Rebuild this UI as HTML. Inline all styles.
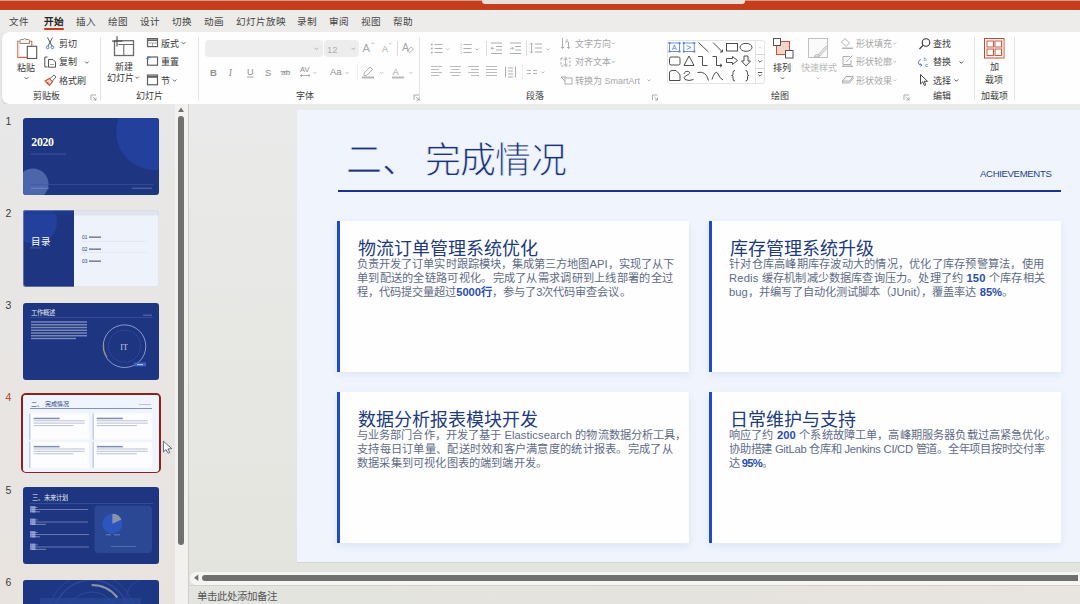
<!DOCTYPE html>
<html lang="zh-CN"><head><meta charset="utf-8"><style>
*{margin:0;padding:0;box-sizing:border-box}
html,body{width:1080px;height:604px;overflow:hidden}
body{position:relative;background:#EAE8E5;font-family:"Liberation Sans",sans-serif;color:#333}
.t{position:absolute;white-space:nowrap}
.r{position:absolute}
svg{position:absolute;overflow:visible}
</style></head><body>
<div class="r" style="left:0px;top:0px;width:1080px;height:9.7px;background:#C43E1C;"></div>
<div class="r" style="left:0px;top:0px;width:1080px;height:1px;background:#D59C8A;"></div>
<div class="r" style="left:482px;top:0px;width:263px;height:3.8px;background:#E9E0DC;border-radius:0 0 3px 3px"></div>
<div class="r" style="left:0px;top:10px;width:1080px;height:22px;background:#EDECEA;"></div>
<div class="r" style="left:0px;top:10px;width:1080px;height:1px;background:#F3EFEE;"></div>
<div class="t" style="left:9px;top:17px;font-size:9.6px;line-height:9.6px;color:#454545;font-weight:normal;">文件</div>
<div class="t" style="left:44px;top:17px;font-size:9.6px;line-height:9.6px;color:#262626;font-weight:bold;">开始</div>
<div class="t" style="left:76px;top:17px;font-size:9.6px;line-height:9.6px;color:#454545;font-weight:normal;">插入</div>
<div class="t" style="left:108px;top:17px;font-size:9.6px;line-height:9.6px;color:#454545;font-weight:normal;">绘图</div>
<div class="t" style="left:140px;top:17px;font-size:9.6px;line-height:9.6px;color:#454545;font-weight:normal;">设计</div>
<div class="t" style="left:172px;top:17px;font-size:9.6px;line-height:9.6px;color:#454545;font-weight:normal;">切换</div>
<div class="t" style="left:204px;top:17px;font-size:9.6px;line-height:9.6px;color:#454545;font-weight:normal;">动画</div>
<div class="t" style="left:236px;top:17px;font-size:9.6px;line-height:9.6px;color:#454545;font-weight:normal;">幻灯片放映</div>
<div class="t" style="left:297px;top:17px;font-size:9.6px;line-height:9.6px;color:#454545;font-weight:normal;">录制</div>
<div class="t" style="left:329px;top:17px;font-size:9.6px;line-height:9.6px;color:#454545;font-weight:normal;">审阅</div>
<div class="t" style="left:361px;top:17px;font-size:9.6px;line-height:9.6px;color:#454545;font-weight:normal;">视图</div>
<div class="t" style="left:393px;top:17px;font-size:9.6px;line-height:9.6px;color:#454545;font-weight:normal;">帮助</div>
<div class="r" style="left:44px;top:28px;width:20px;height:2px;background:#C43E1C;border-radius:1px"></div>
<div class="r" style="left:2px;top:32px;width:1100px;height:72px;background:#FEFEFE;border-radius:7px;box-shadow:0 1px 1.5px rgba(0,0,0,.16)"></div>
<div class="t" style="left:33px;top:92.3px;font-size:9px;line-height:9px;color:#3A3A3A;font-weight:normal;">剪贴板</div>
<div class="t" style="left:136px;top:92.3px;font-size:9px;line-height:9px;color:#3A3A3A;font-weight:normal;">幻灯片</div>
<div class="t" style="left:296px;top:92.3px;font-size:9px;line-height:9px;color:#3A3A3A;font-weight:normal;">字体</div>
<div class="t" style="left:526px;top:92.3px;font-size:9px;line-height:9px;color:#3A3A3A;font-weight:normal;">段落</div>
<div class="t" style="left:771px;top:92.3px;font-size:9px;line-height:9px;color:#3A3A3A;font-weight:normal;">绘图</div>
<div class="t" style="left:933px;top:92.3px;font-size:9px;line-height:9px;color:#3A3A3A;font-weight:normal;">编辑</div>
<div class="t" style="left:981px;top:92.3px;font-size:9px;line-height:9px;color:#3A3A3A;font-weight:normal;">加载项</div>
<div class="r" style="left:100px;top:37px;width:1px;height:64px;background:#E6E4E2;"></div>
<div class="r" style="left:198px;top:37px;width:1px;height:64px;background:#E6E4E2;"></div>
<div class="r" style="left:419px;top:37px;width:1px;height:64px;background:#E6E4E2;"></div>
<div class="r" style="left:974px;top:37px;width:1px;height:64px;background:#E6E4E2;"></div>
<div class="r" style="left:1014px;top:37px;width:1px;height:64px;background:#E6E4E2;"></div>
<div class="t" style="left:17px;top:63.5px;font-size:9px;line-height:9px;color:#3A3A3A;font-weight:normal;">粘贴</div>
<div class="t" style="left:59px;top:40px;font-size:9px;line-height:9px;color:#3A3A3A;font-weight:normal;">剪切</div>
<div class="t" style="left:59px;top:58px;font-size:9px;line-height:9px;color:#3A3A3A;font-weight:normal;">复制</div>
<div class="t" style="left:59px;top:76.5px;font-size:9px;line-height:9px;color:#3A3A3A;font-weight:normal;">格式刷</div>
<div class="t" style="left:115px;top:63px;font-size:9px;line-height:9px;color:#3A3A3A;font-weight:normal;">新建</div>
<div class="t" style="left:107px;top:73.5px;font-size:9px;line-height:9px;color:#3A3A3A;font-weight:normal;">幻灯片</div>
<div class="t" style="left:161px;top:39.5px;font-size:9px;line-height:9px;color:#3A3A3A;font-weight:normal;">版式</div>
<div class="t" style="left:161px;top:58px;font-size:9px;line-height:9px;color:#3A3A3A;font-weight:normal;">重置</div>
<div class="t" style="left:161px;top:76.5px;font-size:9px;line-height:9px;color:#3A3A3A;font-weight:normal;">节</div>
<div class="r" style="left:204.5px;top:40.2px;width:118px;height:16.8px;background:#EDEDED;border-radius:4px"></div>
<div class="r" style="left:324px;top:40.2px;width:34.5px;height:16.8px;background:#EDEDED;border-radius:4px"></div>
<div class="t" style="left:327px;top:44.5px;font-size:9.5px;line-height:9.5px;color:#B0B0B0;font-weight:normal;">12</div>
<div class="r" style="left:397px;top:41px;width:1px;height:15px;background:#E3D9D4;"></div>
<div class="r" style="left:357px;top:65px;width:1px;height:14px;background:#ECECEC;"></div>
<div class="r" style="left:486px;top:41px;width:1px;height:15px;background:#E3D9D4;"></div>
<div class="r" style="left:526px;top:41px;width:1px;height:15px;background:#E3D9D4;"></div>
<div class="r" style="left:522px;top:65px;width:1px;height:14px;background:#ECECEC;"></div>
<div class="t" style="left:575px;top:39.5px;font-size:9px;line-height:9px;color:#A6A6A6;font-weight:normal;">文字方向</div>
<div class="t" style="left:575px;top:58px;font-size:9px;line-height:9px;color:#A6A6A6;font-weight:normal;">对齐文本</div>
<div class="t" style="left:575px;top:76.5px;font-size:9px;line-height:9px;color:#A6A6A6;font-weight:normal;">转换为 SmartArt</div>
<div class="r" style="left:667px;top:40px;width:98px;height:44px;background:#FFFFFF;border:1px solid #E4E4E4;border-radius:3px"></div>
<div class="r" style="left:755px;top:40px;width:10px;height:44px;background:transparent;border-left:1px solid #E4E4E4"></div>
<div class="r" style="left:755px;top:54px;width:10px;height:1px;background:#D0D8E8;"></div>
<div class="r" style="left:755px;top:68px;width:10px;height:1px;background:#D0D8E8;"></div>
<div class="t" style="left:773px;top:63.5px;font-size:9px;line-height:9px;color:#3A3A3A;font-weight:normal;">排列</div>
<div class="t" style="left:801px;top:63.5px;font-size:9px;line-height:9px;color:#B8B8B8;font-weight:normal;">快速样式</div>
<div class="t" style="left:856px;top:39.5px;font-size:9px;line-height:9px;color:#A6A6A6;font-weight:normal;">形状填充</div>
<div class="t" style="left:856px;top:58px;font-size:9px;line-height:9px;color:#A6A6A6;font-weight:normal;">形状轮廓</div>
<div class="t" style="left:856px;top:76.5px;font-size:9px;line-height:9px;color:#A6A6A6;font-weight:normal;">形状效果</div>
<div class="t" style="left:933px;top:40px;font-size:9px;line-height:9px;color:#3A3A3A;font-weight:normal;">查找</div>
<div class="t" style="left:933px;top:58px;font-size:9px;line-height:9px;color:#3A3A3A;font-weight:normal;">替换</div>
<div class="t" style="left:933px;top:76.5px;font-size:9px;line-height:9px;color:#3A3A3A;font-weight:normal;">选择</div>
<div class="t" style="left:990px;top:63px;font-size:9px;line-height:9px;color:#3A3A3A;font-weight:normal;">加</div>
<div class="t" style="left:985px;top:75.5px;font-size:9px;line-height:9px;color:#3A3A3A;font-weight:normal;">载项</div>
<svg style="left:0;top:0" width="1080" height="604"><rect x="17.8" y="41.2" width="14" height="16.2" fill="#FFFFFF"/><path d="M19.5 41.2 H17.8 V57.4 H27.5 M30 41.2 H31.8 V46" fill="none" stroke="#D8694A" stroke-width="1.1"/><rect x="18.4" y="41.8" width="1" height="15" fill="#F8D9CF"/><path d="M20 43.5 V40.5 Q20 39.5 21 39.5 H23 Q24.5 37.5 26 39.5 H28.5 Q29.5 39.5 29.5 40.5 V43.5 Z" fill="#F2F2F2" stroke="#8A8A8A" stroke-width="1"/><rect x="27.3" y="46.3" width="9.4" height="12.2" fill="#fff" stroke="#555" stroke-width="1.1"/><path d="M24.7 77.2 L26.5 79.0 L28.3 77.2" fill="none" stroke="#555" stroke-width="0.9"/><path d="M47.5 37.5 L52 46 M52.5 37.5 L48 46" stroke="#444" stroke-width="0.9" fill="none"/><circle cx="47.6" cy="47.4" r="1.3" fill="none" stroke="#3F6FD0" stroke-width="0.9"/><circle cx="52.4" cy="47.4" r="1.3" fill="none" stroke="#3F6FD0" stroke-width="0.9"/><path d="M47.5 57 H44.8 V67 H47.5" fill="none" stroke="#555" stroke-width="1"/><path d="M48.5 59.5 H53 L55.5 62 V67.2 H48.5 Z" fill="#fff" stroke="#555" stroke-width="1"/><path d="M50 64.5 H54" stroke="#888" stroke-width="0.8"/><path d="M85 61.5 L86.8 63.3 L88.6 61.5" fill="none" stroke="#555" stroke-width="0.9"/><path d="M45 81 L49.5 78.5 L52.5 81.5 L49.5 85.5 Z" fill="#FBE3DA" stroke="#D04A28" stroke-width="1.1"/><path d="M46.5 83 L48.5 82 M47.5 84.3 L49.5 83" stroke="#D04A28" stroke-width="0.7"/><path d="M50 78.5 L54 75 L56 77 L52.5 81" fill="#fff" stroke="#555" stroke-width="0.9"/><path d="M91 100 V95 H96" fill="none" stroke="#9A9A9A" stroke-width="0.8"/><path d="M92.8 96.8 L96 100 M96 97.5 V100 H93.5" fill="none" stroke="#9A9A9A" stroke-width="0.8"/><rect x="114.5" y="40.7" width="19" height="14.8" fill="#fff" stroke="#6A6A6A" stroke-width="1.3"/><path d="M118.5 44.5 H133 M123.8 44.5 V55" stroke="#6A6A6A" stroke-width="1.1"/><path d="M117 36.3 V46.5 M112 41.2 H122.5" stroke="#555" stroke-width="1.2"/><path d="M135.3 76.6 L137.10000000000002 78.39999999999999 L138.9 76.6" fill="none" stroke="#555" stroke-width="0.9"/><rect x="147.5" y="38.6" width="10" height="8" fill="#fff" stroke="#606060" stroke-width="1.2"/><path d="M147.5 40.2 H157.5" stroke="#606060" stroke-width="1.6"/><path d="M148 43 H157 M152.5 43 V46" stroke="#909090" stroke-width="0.8"/><path d="M181.7 42.2 L183.5 44.0 L185.29999999999998 42.2" fill="none" stroke="#555" stroke-width="0.9"/><rect x="147.5" y="57" width="10" height="8.2" fill="#fff" stroke="#606060" stroke-width="1.2"/><path d="M146.5 58.5 Q148 56 151 57.5 M146.5 58.5 L149 59" fill="none" stroke="#4A7AD8" stroke-width="1"/><rect x="147.5" y="75" width="10" height="9.8" fill="#fff" stroke="#606060" stroke-width="1.2"/><path d="M147.5 76.8 H157.5" stroke="#606060" stroke-width="2"/><path d="M172.8 79.5 L174.60000000000002 81.3 L176.4 79.5" fill="none" stroke="#555" stroke-width="0.9"/><path d="M314.5 47.8 L316.3 49.599999999999994 L318.1 47.8" fill="none" stroke="#A8A8A8" stroke-width="0.9"/><path d="M351.5 47.8 L353.3 49.599999999999994 L355.1 47.8" fill="none" stroke="#A8A8A8" stroke-width="0.9"/><text x="362.5" y="51.5" font-family="Liberation Sans" font-size="11" fill="#A6A6A6">A</text><path d="M371.5 44 L372.8 42.6 L374.1 44" fill="none" stroke="#A6A6A6" stroke-width="0.7"/><text x="382" y="51.5" font-family="Liberation Sans" font-size="9" fill="#A6A6A6">A</text><path d="M389 43 L390.2 44.2 L391.4 43" fill="none" stroke="#A6A6A6" stroke-width="0.7"/><text x="402" y="51" font-family="Liberation Sans" font-size="10.5" fill="#A6A6A6">A</text><path d="M407 51 L411 47 L413.5 49 L410 52.5 Z" fill="none" stroke="#A6A6A6" stroke-width="0.8"/><text x="210" y="75.5" font-family="Liberation Sans" font-weight="bold" font-size="9.5" fill="#8E8E8E">B</text><text x="228.8" y="75.5" font-family="Liberation Serif" font-style="italic" font-size="9.5" fill="#8E8E8E">I</text><text x="247" y="74.5" font-family="Liberation Sans" font-size="9" fill="#8E8E8E">U</text><path d="M247 77 H253.5" stroke="#8E8E8E" stroke-width="0.8"/><text x="265" y="75.5" font-family="Liberation Sans" font-size="9.5" fill="#8E8E8E">S</text><text x="281.2" y="75" font-family="Liberation Sans" font-size="8" fill="#8E8E8E">ab</text><path d="M280.5 71.7 H289.5" stroke="#8E8E8E" stroke-width="0.8"/><text x="300" y="71.5" font-family="Liberation Sans" font-size="7.5" fill="#8E8E8E">AV</text><path d="M300.5 75.5 H310 M302 74.3 L300.5 75.5 L302 76.7 M308.5 74.3 L310 75.5 L308.5 76.7" fill="none" stroke="#8E8E8E" stroke-width="0.7"/><path d="M313.3 72.2 L314.8 73.7 L316.3 72.2" fill="none" stroke="#B0B0B0" stroke-width="0.9"/><text x="330" y="75" font-family="Liberation Sans" font-size="9.5" fill="#8E8E8E">Aa</text><path d="M345.5 72.2 L347.0 73.7 L348.5 72.2" fill="none" stroke="#B0B0B0" stroke-width="0.9"/><path d="M364 73 L370 67 L372.5 69.5 L366.5 75.5 H364 Z" fill="none" stroke="#A6A6A6" stroke-width="0.9"/><rect x="362" y="76.5" width="12" height="2" fill="#B8B8B8"/><path d="M380.2 72.2 L381.7 73.7 L383.2 72.2" fill="none" stroke="#B0B0B0" stroke-width="0.9"/><text x="392.5" y="74.5" font-family="Liberation Sans" font-size="9.5" fill="#A6A6A6">A</text><rect x="392" y="76.5" width="12" height="2" fill="#B8B8B8"/><path d="M409.3 72.2 L410.8 73.7 L412.3 72.2" fill="none" stroke="#B0B0B0" stroke-width="0.9"/><path d="M414 100 V95 H419" fill="none" stroke="#9A9A9A" stroke-width="0.8"/><path d="M415.8 96.8 L419 100 M419 97.5 V100 H416.5" fill="none" stroke="#9A9A9A" stroke-width="0.8"/><rect x="431" y="43.7" width="1.6" height="1.6" fill="#A6A6A6"/><path d="M434.5 44.5 H442.5" stroke="#A6A6A6" stroke-width="0.9"/><rect x="431" y="47.7" width="1.6" height="1.6" fill="#A6A6A6"/><path d="M434.5 48.5 H442.5" stroke="#A6A6A6" stroke-width="0.9"/><rect x="431" y="51.7" width="1.6" height="1.6" fill="#A6A6A6"/><path d="M434.5 52.5 H442.5" stroke="#A6A6A6" stroke-width="0.9"/><path d="M446.2 48.5 L447.7 50.0 L449.2 48.5" fill="none" stroke="#B0B0B0" stroke-width="0.9"/><text x="460" y="46.0" font-family="Liberation Sans" font-size="3.5" fill="#A6A6A6">1</text><path d="M463.5 44.5 H471.5" stroke="#A6A6A6" stroke-width="0.9"/><text x="460" y="50.0" font-family="Liberation Sans" font-size="3.5" fill="#A6A6A6">2</text><path d="M463.5 48.5 H471.5" stroke="#A6A6A6" stroke-width="0.9"/><text x="460" y="54.0" font-family="Liberation Sans" font-size="3.5" fill="#A6A6A6">3</text><path d="M463.5 52.5 H471.5" stroke="#A6A6A6" stroke-width="0.9"/><path d="M475.5 48.5 L477.0 50.0 L478.5 48.5" fill="none" stroke="#B0B0B0" stroke-width="0.9"/><path d="M491 43 H502 M496 46.5 H502 M496 50 H502 M491 53.5 H502" stroke="#A6A6A6" stroke-width="0.9"/><path d="M494.5 48.3 L491 48.3 M492.5 46.8 L491 48.3 L492.5 49.8" fill="none" stroke="#A6A6A6" stroke-width="0.8"/><path d="M510 43 H521 M515 46.5 H521 M515 50 H521 M510 53.5 H521" stroke="#A6A6A6" stroke-width="0.9"/><path d="M510 48.3 L513.5 48.3 M512 46.8 L513.5 48.3 L512 49.8" fill="none" stroke="#A6A6A6" stroke-width="0.8"/><path d="M535 44 H542 M535 48 H542 M535 52 H542 M531.5 43 V53 M530 44.5 L531.5 43 L533 44.5 M530 51.5 L531.5 53 L533 51.5" fill="none" stroke="#A6A6A6" stroke-width="0.9"/><path d="M546.3 48.5 L547.8 50.0 L549.3 48.5" fill="none" stroke="#B0B0B0" stroke-width="0.9"/><path d="M431 66.5 H442" stroke="#ABABAB" stroke-width="0.8"/><path d="M431 69.5 H439" stroke="#ABABAB" stroke-width="0.8"/><path d="M431 72.5 H442" stroke="#ABABAB" stroke-width="0.8"/><path d="M431 75.5 H439" stroke="#ABABAB" stroke-width="0.8"/><path d="M450 66.5 H461" stroke="#ABABAB" stroke-width="0.8"/><path d="M451.5 69.5 H459.5" stroke="#ABABAB" stroke-width="0.8"/><path d="M450 72.5 H461" stroke="#ABABAB" stroke-width="0.8"/><path d="M451.5 75.5 H459.5" stroke="#ABABAB" stroke-width="0.8"/><path d="M468 66.5 H479" stroke="#ABABAB" stroke-width="0.8"/><path d="M471 69.5 H479" stroke="#ABABAB" stroke-width="0.8"/><path d="M468 72.5 H479" stroke="#ABABAB" stroke-width="0.8"/><path d="M471 75.5 H479" stroke="#ABABAB" stroke-width="0.8"/><path d="M486 66.5 H497" stroke="#ABABAB" stroke-width="0.8"/><path d="M486 69.5 H497" stroke="#ABABAB" stroke-width="0.8"/><path d="M486 72.5 H497" stroke="#ABABAB" stroke-width="0.8"/><path d="M486 75.5 H497" stroke="#ABABAB" stroke-width="0.8"/><path d="M505.5 66.5 V77.5 M515.5 66.5 V77.5 M508 68 H513 M508 71 H513 M508 74 H513 M508 77 H513" fill="none" stroke="#A6A6A6" stroke-width="0.9"/><path d="M527 70.5 H531 M533 70.5 H537 M527 73.5 H531 M533 73.5 H537" stroke="#A6A6A6" stroke-width="0.9"/><path d="M541.3 71.5 L542.8 73.0 L544.3 71.5" fill="none" stroke="#B0B0B0" stroke-width="0.9"/><path d="M562.5 38 V48.5 M561 47 L562.5 48.5 L564 47 M568.5 42 V48.5 M567 47 L568.5 48.5 L570 47" fill="none" stroke="#A6A6A6" stroke-width="0.9"/><text x="565" y="43" font-family="Liberation Sans" font-size="5.5" fill="#A6A6A6">A</text><path d="M611.7 42.5 L613.2 44.0 L614.7 42.5" fill="none" stroke="#B0B0B0" stroke-width="0.9"/><path d="M561 58 V66 H570 V58 Z" fill="none" stroke="#A6A6A6" stroke-width="0.9" stroke-dasharray="2.5 1.5"/><path d="M565.5 58.5 V65.5 M563.5 60 L565.5 58.5 L567.5 60 M563.5 64 L565.5 65.5 L567.5 64" fill="none" stroke="#A6A6A6" stroke-width="0.8"/><path d="M611.7 61 L613.2 62.5 L614.7 61" fill="none" stroke="#B0B0B0" stroke-width="0.9"/><path d="M561 77 H566 M561 77 L565 81 H567" fill="none" stroke="#A6A6A6" stroke-width="1"/><rect x="565" y="78" width="7" height="6" fill="#fff" stroke="#A6A6A6" stroke-width="0.9"/><path d="M647.5 79.5 L649.0 81.0 L650.5 79.5" fill="none" stroke="#B0B0B0" stroke-width="0.9"/><path d="M652.5 100 V95 H657.5" fill="none" stroke="#9A9A9A" stroke-width="0.8"/><path d="M654.3 96.8 L657.5 100 M657.5 97.5 V100 H655.0" fill="none" stroke="#9A9A9A" stroke-width="0.8"/><rect x="669.5" y="43" width="10" height="8.5" fill="none" stroke="#5B86D8" stroke-width="0.9"/><text x="671.8" y="50.3" font-family="Liberation Sans" font-size="7.5" fill="#5B86D8">A</text>
<rect x="683.8" y="43" width="10.5" height="8.5" fill="none" stroke="#5B86D8" stroke-width="0.9"/><path d="M686.5 45.5 L691 47.5 L686.5 49.5" fill="none" stroke="#5B86D8" stroke-width="0.8"/>
<path d="M698.5 42.5 L708.5 52 M713 42.5 L722.5 52 M720 52 H722.5 V49.5" fill="none" stroke="#3A3A3A" stroke-width="0.9"/>
<rect x="726.5" y="43.5" width="11" height="7.5" fill="none" stroke="#3A3A3A" stroke-width="0.9"/><ellipse cx="746" cy="47.3" rx="6" ry="4" fill="none" stroke="#3A3A3A" stroke-width="0.9"/>
<rect x="669.5" y="57" width="10.5" height="8" rx="1.5" fill="none" stroke="#3A3A3A" stroke-width="0.9"/><path d="M684 65.5 L689 56 L694 65.5 Z" fill="none" stroke="#3A3A3A" stroke-width="0.9"/>
<path d="M698 56.5 H702.5 V65.5 H707.5 M712.5 56.5 H716.5 V65.5 H722 M720 63.8 L722 65.5 L720 67.2" fill="none" stroke="#3A3A3A" stroke-width="0.9"/>
<path d="M726.5 58.5 H732.5 V56.5 L737.5 60.5 L732.5 64.5 V62.5 H726.5 Z" fill="none" stroke="#3A3A3A" stroke-width="0.9"/><path d="M744 56 H748 V61 H750.5 L746 66 L741.5 61 H744 Z" fill="none" stroke="#3A3A3A" stroke-width="0.9"/>
<path d="M669.5 80.5 V73 Q669.5 70.5 672 70.5 H676 Q678 73 680 74.5 V80.5 Z" fill="none" stroke="#3A3A3A" stroke-width="0.9"/>
<path d="M684 74 Q685 70.5 688.5 71.5 Q692 73 685.5 76 Q683 77 685 79.5 Q689 81.5 693.5 79.5" fill="none" stroke="#3A3A3A" stroke-width="0.9"/>
<path d="M697.5 72.5 Q706 70.5 708.5 80.5 M712 79.5 Q715 70 717.5 73 Q720 79 723 80" fill="none" stroke="#3A3A3A" stroke-width="0.9"/>
<path d="M735 70.5 Q733 70.5 733 72.5 V74.5 Q733 75.5 731.5 75.5 Q733 75.5 733 76.5 V79 Q733 81 735 81 M745.5 70.5 Q747.5 70.5 747.5 72.5 V74.5 Q747.5 75.5 749 75.5 Q747.5 75.5 747.5 76.5 V79 Q747.5 81 745.5 81" fill="none" stroke="#3A3A3A" stroke-width="0.9"/><path d="M758.3 48.5 L760 46.8 L761.7 48.5" fill="none" stroke="#C8C8C8" stroke-width="0.8"/><path d="M758.3 60.5 L760 62.2 L761.7 60.5" fill="none" stroke="#444" stroke-width="0.9"/><path d="M757.8 72.5 H762.2 M758.3 74.5 L760 76.2 L761.7 74.5" fill="none" stroke="#444" stroke-width="0.9"/><rect x="668.5" y="42" width="2" height="2" fill="#5B86D8"/><rect x="678.5" y="42" width="2" height="2" fill="#5B86D8"/><rect x="668.5" y="50.5" width="2" height="2" fill="#5B86D8"/><rect x="678.5" y="50.5" width="2" height="2" fill="#5B86D8"/><rect x="682.8" y="42" width="2" height="2" fill="#5B86D8"/><rect x="693.3" y="42" width="2" height="2" fill="#5B86D8"/><rect x="682.8" y="50.5" width="2" height="2" fill="#5B86D8"/><rect x="693.3" y="50.5" width="2" height="2" fill="#5B86D8"/><rect x="776.5" y="41.5" width="13" height="13" fill="#F4D5CC" stroke="#D0502F" stroke-width="1"/><rect x="773.5" y="38.5" width="7" height="7" fill="#fff" stroke="#555" stroke-width="1"/><rect x="785.5" y="50.5" width="7.5" height="7.5" fill="#fff" stroke="#555" stroke-width="1"/><path d="M781 77.5 L782.5 79.0 L784 77.5" fill="none" stroke="#444" stroke-width="0.9"/><rect x="808.5" y="38.5" width="19" height="19" fill="#FAFAFA" stroke="#C0C0C0" stroke-width="1"/><path d="M818 55 L826 46 L827.5 47.5 L820 56 Z M814 57 Q815 53.5 818 54.5 L819.5 56.5 Z" fill="#E4E4E4" stroke="#B8B8B8" stroke-width="0.8"/><path d="M816.5 77.5 L818.0 79.0 L819.5 77.5" fill="none" stroke="#C0C0C0" stroke-width="0.9"/><path d="M845 38.5 L849.5 43 L846 46.5 L841.5 42 Z" fill="none" stroke="#A6A6A6" stroke-width="0.9"/><rect x="842" y="47.5" width="11" height="1.5" fill="#B8B8B8"/><path d="M893.2 42.5 L894.7 44.0 L896.2 42.5" fill="none" stroke="#B8B8B8" stroke-width="0.9"/><path d="M843 56.5 H850 M843 56.5 V64.5 H851 V60 M846 62 L852.5 55.5" fill="none" stroke="#A6A6A6" stroke-width="0.9"/><rect x="842" y="65.5" width="11" height="1.5" fill="#B8B8B8"/><path d="M893.2 61 L894.7 62.5 L896.2 61" fill="none" stroke="#B8B8B8" stroke-width="0.9"/><path d="M842.5 81 L846 76.5 H853 L849.5 81 Z M842.5 81 V83 L849.5 83 L853 78.5 V76.5" fill="#F0F0F0" stroke="#A6A6A6" stroke-width="0.9"/><path d="M893.2 79.5 L894.7 81.0 L896.2 79.5" fill="none" stroke="#B8B8B8" stroke-width="0.9"/><path d="M904 100 V95 H909" fill="none" stroke="#9A9A9A" stroke-width="0.8"/><path d="M905.8 96.8 L909 100 M909 97.5 V100 H906.5" fill="none" stroke="#9A9A9A" stroke-width="0.8"/><circle cx="926" cy="42.5" r="3.8" fill="none" stroke="#333" stroke-width="1.1"/><path d="M923.3 45.2 L919.5 49" stroke="#333" stroke-width="1.2"/><text x="923.5" y="60.5" font-family="Liberation Sans" font-size="5.5" fill="#5B86D8">b</text><text x="925" y="67" font-family="Liberation Sans" font-size="6" fill="#3F6FD0">c</text><path d="M921 59.5 Q918.5 60 918.5 62.5 Q918.5 65 921 65 M920 63.8 L922 65 L920.5 66.5" fill="none" stroke="#3F6FD0" stroke-width="0.9"/><path d="M959.5 61.5 L961.3 63.3 L963.1 61.5" fill="none" stroke="#444" stroke-width="0.9"/><path d="M920.5 74.5 V84 L922.8 81.8 L924.5 85.5 L925.8 84.8 L924.2 81.3 L927.5 81.3 Z" fill="#fff" stroke="#333" stroke-width="0.9" stroke-linejoin="round"/><path d="M954.5 79.5 L956.3 81.3 L958.1 79.5" fill="none" stroke="#444" stroke-width="0.9"/><rect x="984.5" y="38.5" width="19.5" height="19.5" fill="#fff" stroke="#C8472A" stroke-width="1"/><rect x="1001.5" y="40" width="2" height="17.5" fill="#F6D8CE"/><rect x="987" y="41" width="6.5" height="6" fill="#fff" stroke="#C8472A" stroke-width="0.9"/><rect x="995" y="41" width="6.5" height="6" fill="#fff" stroke="#C8472A" stroke-width="0.9"/><rect x="987" y="49" width="6.5" height="6.5" fill="#fff" stroke="#C8472A" stroke-width="0.9"/><rect x="995" y="49" width="6.5" height="6.5" fill="#fff" stroke="#C8472A" stroke-width="0.9"/></svg>
<div class="r" style="left:0px;top:104px;width:175px;height:500px;background:linear-gradient(#E8E8E8,#E8E3DF);"></div>
<div class="r" style="left:175px;top:104px;width:13px;height:500px;background:#F2F1EF;"></div>
<div class="r" style="left:188px;top:104px;width:892px;height:481px;background:linear-gradient(#EAEAEA,#E4E4DE);"></div>
<div class="r" style="left:188px;top:104px;width:1px;height:500px;background:#CFCDCA;"></div>
<svg style="left:0;top:0" width="1080" height="604"><path d="M178 112 L181 107.5 L184 112 Z" fill="#6F6F6F"/></svg>
<div class="r" style="left:178px;top:116px;width:6px;height:429px;background:#6F706F;border-radius:3px"></div>
<div class="r" style="left:190px;top:571.5px;width:900px;height:13px;background:#F6F5F3;border-radius:6.5px 0 0 6.5px"></div>
<svg style="left:0;top:0" width="1080" height="604"><path d="M198.3 574.5 L194 577.7 L198.3 580.9 Z" fill="#6F6F6F"/></svg>
<div class="r" style="left:202px;top:575px;width:876px;height:6px;background:#6E706E;border-radius:3px 0 0 3px"></div>
<div class="r" style="left:1079px;top:110px;width:1px;height:452px;background:#F4F6FA;"></div>
<div class="r" style="left:189px;top:584.5px;width:891px;height:1px;background:#D3D1CD;"></div>
<div class="r" style="left:189px;top:585.5px;width:891px;height:19px;background:linear-gradient(90deg,#E3E4DF,#E5E3DE 50%,#E8E4DF);"></div>
<div class="t" style="left:197px;top:591px;font-size:10.5px;line-height:10.5px;color:#555555;font-weight:normal;">单击此处添加备注</div>
<div class="t" style="left:5.5px;top:115.5px;font-size:10.5px;line-height:10.5px;color:#3B3B3B;font-weight:normal;">1</div>
<div class="t" style="left:5.5px;top:207.8px;font-size:10.5px;line-height:10.5px;color:#3B3B3B;font-weight:normal;">2</div>
<div class="t" style="left:5.5px;top:300.1px;font-size:10.5px;line-height:10.5px;color:#3B3B3B;font-weight:normal;">3</div>
<div class="t" style="left:5.5px;top:392.4px;font-size:10.5px;line-height:10.5px;color:#C43E1C;font-weight:normal;">4</div>
<div class="t" style="left:5.5px;top:484.7px;font-size:10.5px;line-height:10.5px;color:#3B3B3B;font-weight:normal;">5</div>
<div class="t" style="left:5.5px;top:577.0px;font-size:10.5px;line-height:10.5px;color:#3B3B3B;font-weight:normal;">6</div>
<svg style="left:23px;top:118px" width="136" height="77" viewBox="0 0 136 77"><defs><clipPath id="c118"><rect width="136" height="77" rx="3"/></clipPath></defs><g clip-path="url(#c118)"><rect width="136" height="77" fill="#1E3581"/>
<circle cx="131" cy="14" r="38" fill="#22409C"/>
<circle cx="10" cy="66" r="15.5" fill="#4D65AA"/>
<text x="8.3" y="27.5" font-family="Liberation Serif" font-weight="bold" font-size="11.8" fill="#fff" letter-spacing="-0.3">2020</text>
<rect x="8" y="35.5" width="35" height="1.1" fill="#5C76BC" opacity="0.5"/>
<rect x="7" y="66.3" width="123" height="0.6" fill="#3D59A8"/>
<rect x="8" y="69.7" width="18" height="1" fill="#A8B4D8" opacity="0.45"/>
<rect x="109" y="69.7" width="20" height="1" fill="#A8B4D8" opacity="0.45"/></g></svg>
<svg style="left:23px;top:210px" width="136" height="77" viewBox="0 0 136 77"><defs><clipPath id="c210"><rect width="136" height="77" rx="3"/></clipPath></defs><g clip-path="url(#c210)"><rect width="136" height="77" fill="#EEF2FA"/>
<rect width="136" height="5.5" fill="#DFE4EE"/>
<rect width="51" height="77" fill="#1E3581"/>
<circle cx="12" cy="12" r="22" fill="#22409C"/>
<rect x="0" y="0" width="51" height="4.5" fill="#1E3A90" opacity="0.5"/>
<text x="7.5" y="34.5" font-size="9.5" fill="#fff" font-family="Liberation Serif">目录</text>
<rect x="7" y="37.5" width="11" height="0.8" fill="#8FA2D0" opacity="0.5"/>
<text x="59" y="29" font-size="4.8" fill="#2A3E88">01</text><rect x="66" y="26.5" width="12" height="1.3" fill="#3A4A78" opacity="0.8"/>
<text x="59" y="41" font-size="4.8" fill="#2A3E88">02</text><rect x="66" y="38.5" width="12" height="1.3" fill="#3A4A78" opacity="0.8"/>
<text x="59" y="53" font-size="4.8" fill="#2A3E88">03</text><rect x="66" y="50.5" width="12" height="1.3" fill="#3A4A78" opacity="0.8"/>
<rect x="59" y="31" width="65" height="0.4" fill="#D3DAEA"/><rect x="59" y="42.5" width="65" height="0.4" fill="#D3DAEA"/>
<rect x="0.25" y="0.25" width="135.5" height="76.5" rx="3" fill="none" stroke="#CFCFCF" stroke-width="0.5"/></g></svg>
<svg style="left:23px;top:302.6px" width="136" height="77" viewBox="0 0 136 77"><defs><clipPath id="c302"><rect width="136" height="77" rx="3"/></clipPath></defs><g clip-path="url(#c302)"><rect width="136" height="77" fill="#1E3581"/>
<text x="8" y="12" font-size="6.3" fill="#fff" opacity="0.9">工作概述</text>
<rect x="7" y="14.5" width="123" height="0.5" fill="#4863AE"/>
<rect x="120" y="11.8" width="9" height="0.6" fill="#8FA2D0"/>
<rect x="8" y="18.30" width="56" height="1.4" fill="#DDE3F6" opacity="0.5"/><rect x="8" y="21.05" width="56" height="1.4" fill="#DDE3F6" opacity="0.5"/><rect x="8" y="23.80" width="56" height="1.4" fill="#DDE3F6" opacity="0.5"/><rect x="8" y="26.55" width="56" height="1.4" fill="#DDE3F6" opacity="0.5"/><rect x="8" y="29.30" width="56" height="1.4" fill="#DDE3F6" opacity="0.5"/><rect x="8" y="32.05" width="56" height="1.4" fill="#DDE3F6" opacity="0.5"/><rect x="8" y="34.80" width="45" height="1.4" fill="#DDE3F6" opacity="0.5"/>
<circle cx="101.5" cy="43.2" r="21.3" fill="none" stroke="#B8C6EA" stroke-width="0.7"/>
<circle cx="101.5" cy="43.2" r="16" fill="none" stroke="#3E64C8" stroke-width="0.6" stroke-dasharray="1.5 1"/>
<path d="M84 54 A21.3 21.3 0 0 1 80.5 40" fill="none" stroke="#C0A060" stroke-width="0.7"/>
<text x="97.3" y="46.5" font-family="Liberation Serif" font-size="8" fill="#C8D0E8">IT</text>
<rect x="111" y="59.5" width="12" height="3.8" fill="#3D62C8"/><rect x="114" y="61" width="6" height="1.2" fill="#AFC0EA"/></g></svg>
<div class="r" style="left:20.5px;top:393px;width:140.5px;height:80px;background:transparent;border:2px solid #8F1E1E;border-radius:5px"></div>
<svg style="left:23px;top:395px" width="136" height="77" viewBox="0 0 136 77"><defs><clipPath id="c395"><rect width="136" height="77" rx="3"/></clipPath></defs><g clip-path="url(#c395)"><rect width="136" height="77" fill="#EFF4FD"/>
<text x="8" y="10.8" font-size="6" fill="#223A80">二、 完成情况</text>
<rect x="7" y="13.2" width="122" height="0.6" fill="#3A5090"/>
<rect x="116" y="9.2" width="12" height="0.8" fill="#8090B8" opacity="0.6"/>
<rect x="6.6" y="18.7" width="59.4" height="25.9" fill="#FDFDFF"/><rect x="6.6" y="18.7" width="0.6" height="25.9" fill="#5070C8" opacity="0.8"/><rect x="10.6" y="22.7" width="26" height="1.5" fill="#6070A0" opacity="0.8"/><rect x="10.6" y="25.2" width="51" height="1.1" fill="#9AA4BC" opacity="0.6"/><rect x="10.6" y="27.6" width="51" height="1.1" fill="#9AA4BC" opacity="0.6"/><rect x="10.6" y="30.0" width="40" height="1.1" fill="#9AA4BC" opacity="0.6"/><rect x="69.8" y="18.7" width="59.4" height="25.9" fill="#FDFDFF"/><rect x="69.8" y="18.7" width="0.6" height="25.9" fill="#5070C8" opacity="0.8"/><rect x="73.8" y="22.7" width="26" height="1.5" fill="#6070A0" opacity="0.8"/><rect x="73.8" y="25.2" width="51" height="1.1" fill="#9AA4BC" opacity="0.6"/><rect x="73.8" y="27.6" width="51" height="1.1" fill="#9AA4BC" opacity="0.6"/><rect x="73.8" y="30.0" width="40" height="1.1" fill="#9AA4BC" opacity="0.6"/><rect x="6.6" y="46.9" width="59.4" height="25.9" fill="#FDFDFF"/><rect x="6.6" y="46.9" width="0.6" height="25.9" fill="#5070C8" opacity="0.8"/><rect x="10.6" y="50.9" width="26" height="1.5" fill="#6070A0" opacity="0.8"/><rect x="10.6" y="53.4" width="51" height="1.1" fill="#9AA4BC" opacity="0.6"/><rect x="10.6" y="55.8" width="51" height="1.1" fill="#9AA4BC" opacity="0.6"/><rect x="10.6" y="58.2" width="40" height="1.1" fill="#9AA4BC" opacity="0.6"/><rect x="69.8" y="46.9" width="59.4" height="25.9" fill="#FDFDFF"/><rect x="69.8" y="46.9" width="0.6" height="25.9" fill="#5070C8" opacity="0.8"/><rect x="73.8" y="50.9" width="26" height="1.5" fill="#6070A0" opacity="0.8"/><rect x="73.8" y="53.4" width="51" height="1.1" fill="#9AA4BC" opacity="0.6"/><rect x="73.8" y="55.8" width="51" height="1.1" fill="#9AA4BC" opacity="0.6"/><rect x="73.8" y="58.2" width="40" height="1.1" fill="#9AA4BC" opacity="0.6"/></g></svg>
<svg style="left:23px;top:487px" width="136" height="77" viewBox="0 0 136 77"><defs><clipPath id="c487"><rect width="136" height="77" rx="3"/></clipPath></defs><g clip-path="url(#c487)"><rect width="136" height="77" fill="#1E3581"/>
<text x="9" y="12.5" font-size="6.3" fill="#fff" opacity="0.9">三、未来计划</text>
<rect x="7" y="16" width="123" height="0.5" fill="#4863AE"/>
<rect x="7" y="19" width="5.5" height="6.5" fill="#8EA2D8" opacity="0.8"/><rect x="9" y="20" width="6" height="0.8" fill="#C5CFEA" opacity="0.5"/><rect x="9" y="22" width="56" height="1" fill="#D5DCF0" opacity="0.4"/><rect x="9" y="24.3" width="8" height="1" fill="#D5DCF0" opacity="0.5"/><rect x="7" y="31.5" width="5.5" height="6.5" fill="#8EA2D8" opacity="0.8"/><rect x="9" y="32.5" width="6" height="0.8" fill="#C5CFEA" opacity="0.5"/><rect x="9" y="34.5" width="56" height="1" fill="#D5DCF0" opacity="0.4"/><rect x="9" y="36.8" width="14" height="1" fill="#D5DCF0" opacity="0.5"/><rect x="7" y="44" width="5.5" height="6.5" fill="#8EA2D8" opacity="0.8"/><rect x="9" y="45" width="6" height="0.8" fill="#C5CFEA" opacity="0.5"/><rect x="9" y="47" width="57" height="1" fill="#D5DCF0" opacity="0.4"/><rect x="9" y="49.3" width="8" height="1" fill="#D5DCF0" opacity="0.5"/><rect x="7" y="56.5" width="5.5" height="6.5" fill="#8EA2D8" opacity="0.8"/><rect x="9" y="57.5" width="6" height="0.8" fill="#C5CFEA" opacity="0.5"/><rect x="9" y="59.5" width="57" height="1" fill="#D5DCF0" opacity="0.4"/><rect x="9" y="61.8" width="14" height="1" fill="#D5DCF0" opacity="0.5"/>
<rect x="71.5" y="18.5" width="57.5" height="47.5" rx="4" fill="#2B4894"/>
<circle cx="89.4" cy="36.8" r="10" fill="#2D55C0"/>
<path d="M89.4 36.8 L89.4 26.8 A10 10 0 0 1 98.4 32.5 Z" fill="#8A94A8"/>
<rect x="83" y="47.5" width="5" height="0.7" fill="#C5CFEA" opacity="0.6"/><rect x="91" y="47.5" width="6" height="0.7" fill="#C5CFEA" opacity="0.6"/>
<rect x="88" y="59.3" width="25" height="0.6" fill="#8FA2D0" opacity="0.7"/></g></svg>
<svg style="left:23px;top:579.5px" width="136" height="77" viewBox="0 0 136 77"><defs><clipPath id="c579"><rect width="136" height="77" rx="3"/></clipPath></defs><g clip-path="url(#c579)"><rect width="136" height="77" fill="#1E3784"/>
<circle cx="68.6" cy="38" r="44" fill="none" stroke="#2E4C9C" stroke-width="0.8"/>
<circle cx="68.6" cy="38" r="38" fill="none" stroke="#2A4896" stroke-width="1.5"/>
<circle cx="68.6" cy="38" r="26" fill="none" stroke="#2E4C9C" stroke-width="1"/>
<path d="M68.6 5 A33 33 0 0 1 94.4 17.5" fill="none" stroke="#8A94A8" stroke-width="2.2"/>
<circle cx="125" cy="20" r="22" fill="none" stroke="#3554A4" stroke-width="0.6"/>
<rect x="17" y="18" width="101" height="59" fill="#2A4898" opacity="0.75"/>
<rect x="0" y="0" width="17" height="77" fill="#1D3680" opacity="0.5"/></g></svg>
<svg style="left:163px;top:440px" width="12" height="17" viewBox="0 0 12 17"><path d="M0.4 1.3 L0.4 12 L3 9.6 L5.2 13.2 L6.8 12.4 L4.9 9 L8.7 8.6 Z" fill="#fff" stroke="#34405E" stroke-width="0.75" stroke-linejoin="round"/></svg>
<div class="r" style="left:297px;top:110px;width:804px;height:452px;background:#EFF4FD;box-shadow:0 0.8px 0 #D2D2D2"></div>
<div class="t" style="left:346px;top:143px;font-size:36px;line-height:36px;color:#1A3279;font-weight:normal;-webkit-text-stroke:0.8px #EFF4FD">二、</div>
<div class="t" style="left:425px;top:143px;font-size:36px;line-height:36px;color:#1A3279;font-weight:normal;letter-spacing:-0.8px;-webkit-text-stroke:0.8px #EFF4FD">完成情况</div>
<div class="r" style="left:338px;top:189.5px;width:723px;height:2.5px;background:#1B338C;"></div>
<div class="t" style="left:980px;top:169px;font-size:9.6px;line-height:9.6px;color:#2A3E88;font-weight:normal;letter-spacing:-0.35px">ACHIEVEMENTS</div>
<div class="r" style="left:337px;top:221px;width:352px;height:150.8px;background:#FEFEFF;box-shadow:0 3px 7px rgba(110,130,180,.12)"></div>
<div class="r" style="left:337.2px;top:221px;width:2.9px;height:150.8px;background:#1E4CC8;"></div>
<div class="t" style="left:358px;top:239.6px;font-size:18px;line-height:18px;color:#213A7C;font-weight:normal;">物流订单管理系统优化</div>
<div class="t" style="left:357px;top:259.3px;font-size:11.2px;line-height:11.2px;color:#5F6C86;font-weight:normal;letter-spacing:0.069px">负责开发了订单实时跟踪模块，集成第三方地图API，实现了从下</div>
<div class="t" style="left:357px;top:273.2px;font-size:11.2px;line-height:11.2px;color:#5F6C86;font-weight:normal;letter-spacing:0.293px">单到配送的全链路可视化。完成了从需求调研到上线部署的全过</div>
<div class="t" style="left:357px;top:287.1px;font-size:11.2px;line-height:11.2px;color:#5F6C86;font-weight:normal;letter-spacing:0.015px">程，代码提交量超过<b style="color:#2A4DB0">5000行</b>，参与了3次代码审查会议。</div>
<div class="r" style="left:709px;top:221px;width:352px;height:150.8px;background:#FEFEFF;box-shadow:0 3px 7px rgba(110,130,180,.12)"></div>
<div class="r" style="left:709.2px;top:221px;width:2.9px;height:150.8px;background:#1E4CC8;"></div>
<div class="t" style="left:730px;top:239.6px;font-size:18px;line-height:18px;color:#213A7C;font-weight:normal;">库存管理系统升级</div>
<div class="t" style="left:729px;top:259.3px;font-size:11.2px;line-height:11.2px;color:#5F6C86;font-weight:normal;letter-spacing:0.256px">针对仓库高峰期库存波动大的情况，优化了库存预警算法，使用</div>
<div class="t" style="left:729px;top:273.2px;font-size:11.2px;line-height:11.2px;color:#5F6C86;font-weight:normal;letter-spacing:0.185px">Redis 缓存机制减少数据库查询压力。处理了约 <b style="color:#2A4DB0">150</b> 个库存相关</div>
<div class="t" style="left:729px;top:287.1px;font-size:11.2px;line-height:11.2px;color:#5F6C86;font-weight:normal;letter-spacing:0.013px">bug，并编写了自动化测试脚本（JUnit），覆盖率达 <b style="color:#2A4DB0">85%</b>。</div>
<div class="r" style="left:337px;top:392px;width:352px;height:150.8px;background:#FEFEFF;box-shadow:0 3px 7px rgba(110,130,180,.12)"></div>
<div class="r" style="left:337.2px;top:392px;width:2.9px;height:150.8px;background:#1E4CC8;"></div>
<div class="t" style="left:358px;top:410.6px;font-size:18px;line-height:18px;color:#213A7C;font-weight:normal;">数据分析报表模块开发</div>
<div class="t" style="left:357px;top:430.3px;font-size:11.2px;line-height:11.2px;color:#5F6C86;font-weight:normal;letter-spacing:0.092px">与业务部门合作，开发了基于 Elasticsearch 的物流数据分析工具，</div>
<div class="t" style="left:357px;top:444.2px;font-size:11.2px;line-height:11.2px;color:#5F6C86;font-weight:normal;letter-spacing:0.278px">支持每日订单量、配送时效和客户满意度的统计报表。完成了从</div>
<div class="t" style="left:357px;top:458.1px;font-size:11.2px;line-height:11.2px;color:#5F6C86;font-weight:normal;letter-spacing:0.188px">数据采集到可视化图表的端到端开发。</div>
<div class="r" style="left:709px;top:392px;width:352px;height:150.8px;background:#FEFEFF;box-shadow:0 3px 7px rgba(110,130,180,.12)"></div>
<div class="r" style="left:709.2px;top:392px;width:2.9px;height:150.8px;background:#1E4CC8;"></div>
<div class="t" style="left:730px;top:410.6px;font-size:18px;line-height:18px;color:#213A7C;font-weight:normal;">日常维护与支持</div>
<div class="t" style="left:729px;top:430.3px;font-size:11.2px;line-height:11.2px;color:#5F6C86;font-weight:normal;letter-spacing:0.152px">响应了约 <b style="color:#2A4DB0">200</b> 个系统故障工单，高峰期服务器负载过高紧急优化。</div>
<div class="t" style="left:729px;top:444.2px;font-size:11.2px;line-height:11.2px;color:#5F6C86;font-weight:normal;letter-spacing:-0.241px">协助搭建 GitLab 仓库和 Jenkins CI/CD 管道。全年项目按时交付率</div>
<div class="t" style="left:729px;top:458.1px;font-size:11.2px;line-height:11.2px;color:#5F6C86;font-weight:normal;letter-spacing:-0.720px">达 <b style="color:#2A4DB0">95%</b>。</div>
</body></html>
